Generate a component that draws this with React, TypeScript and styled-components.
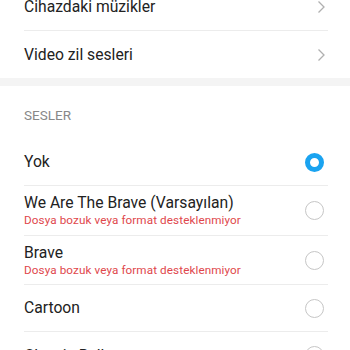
import React from 'react'
import styled, { createGlobalStyle } from 'styled-components'

const GlobalStyle = createGlobalStyle`
  html, body {
    margin: 0;
    padding: 0;
    background: #ffffff;
    overflow: hidden;
  }
  body {
    font-family: Roboto, "Noto Sans", sans-serif;
    -webkit-font-smoothing: antialiased;
  }
`

const Page = styled.div`
  display: flex;
  flex-direction: column;
  width: 350px;
  margin-top: -16px;
`

const Group = styled.div`
  display: flex;
  flex-direction: column;
  padding: 0 22px 0 24px;
`

const Row = styled.div<{ $height: number; $last?: boolean }>`
  display: flex;
  align-items: center;
  justify-content: space-between;
  height: ${(p) => p.$height}px;
  box-sizing: border-box;
  border-bottom: ${(p) => (p.$last ? 'none' : '1px solid #ececec')};
`

const Texts = styled.div`
  display: flex;
  flex-direction: column;
`

const Title = styled.span`
  font-size: 15.7px;
  line-height: 20px;
  color: #222222;
`

const Subtitle = styled.span`
  font-size: 11.7px;
  line-height: 15px;
  color: #e0474c;
  letter-spacing: 0.1px;
`

const Band = styled.div`
  height: 8px;
  background: #f4f4f4;
`

const SectionHeader = styled.div`
  height: 53px;
  box-sizing: border-box;
  padding: 21px 24px 0;
  font-size: 13.5px;
  line-height: 16px;
  color: #888888;
`

const Radio = styled.span<{ $checked?: boolean }>`
  width: 19px;
  height: 19px;
  box-sizing: border-box;
  border-radius: 50%;
  margin-right: 4px;
  flex: none;
  border: ${(p) => (p.$checked ? '5px solid #1aa3f0' : '1.3px solid #c6c6c6')};
`

const Chevron = () => (
  <svg width="10" height="14" viewBox="0 0 10 14" style={{ marginRight: 2 }}>
    <path d="M2.5 1.5 L8 7 L2.5 12.5" fill="none" stroke="#b0b0b0" strokeWidth="1.3" />
  </svg>
)

const sounds = [
  { name: 'Yok', checked: true, height: 47 },
  { name: 'We Are The Brave (Varsayılan)', error: true, height: 50 },
  { name: 'Brave', error: true, height: 49 },
  { name: 'Cartoon', height: 47 },
  { name: 'Classic Bell', height: 47, last: true },
]

export default function App() {
  return (
    <>
      <GlobalStyle />
      <Page>
        <Group>
          <Row $height={47}>
            <Title>Cihazdaki müzikler</Title>
            <Chevron />
          </Row>
          <Row $height={47} $last>
            <Title>Video zil sesleri</Title>
            <Chevron />
          </Row>
        </Group>
        <Band />
        <SectionHeader>SESLER</SectionHeader>
        <Group>
          {sounds.map((s) => (
            <Row key={s.name} $height={s.height} $last={s.last}>
              <Texts>
                <Title>{s.name}</Title>
                {s.error && <Subtitle>Dosya bozuk veya format desteklenmiyor</Subtitle>}
              </Texts>
              <Radio $checked={s.checked} />
            </Row>
          ))}
        </Group>
      </Page>
    </>
  )
}
